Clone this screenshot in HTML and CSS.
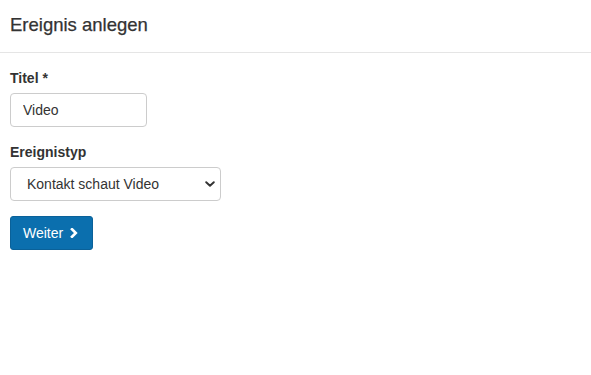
FILE: index.html
```html
<!DOCTYPE html>
<html lang="de">
<head>
<meta charset="utf-8">
<title>Ereignis anlegen</title>
<link rel="stylesheet" href="styles.css">
</head>
<body>
<div class="modal">
  <div class="modal-header">
    <h4 class="modal-title">Ereignis anlegen</h4>
  </div>
  <form class="modal-body">
    <div class="form-group">
      <label class="label" for="titel">Titel *</label>
      <input class="input input-title" id="titel" type="text" value="Video">
    </div>
    <div class="form-group">
      <label class="label" for="typ">Ereignistyp</label>
      <div class="select-wrap">
        <select class="select" id="typ">
          <option>Kontakt schaut Video</option>
        </select>
        <svg class="select-arrow" width="10" height="6" viewBox="0 0 10 6" aria-hidden="true"><path d="M1.2 1.2 L5 4.8 L8.8 1.2" fill="none" stroke="#333" stroke-width="1.9" stroke-linecap="round" stroke-linejoin="round"/></svg>
      </div>
    </div>
    <button class="btn" type="button">Weiter
      <svg class="btn-icon" width="8" height="10" viewBox="0 0 8 10" aria-hidden="true"><path d="M2 1.2 L5.8 5 L2 8.8" fill="none" stroke="#fff" stroke-width="2.6" stroke-linecap="square" stroke-linejoin="miter"/></svg>
    </button>
  </form>
</div>
</body>
</html>
```

FILE: styles.css
```css
* { box-sizing: border-box; }
html, body { margin: 0; padding: 0; background: #fff; }
body {
  font-family: "Liberation Sans", Arial, Helvetica, sans-serif;
  font-size: 14px;
  color: #333;
  width: 591px;
  height: 375px;
}
.modal-header {
  padding: 14px 10px 16px;
  border-bottom: 1px solid #e5e5e5;
}
.modal-title {
  margin: 0;
  font-size: 18.5px;
  line-height: 22px;
  font-weight: 400;
  color: #333;
  -webkit-text-stroke: 0.25px #333;
}
.modal-body {
  padding: 15px 10px;
  display: flex;
  flex-direction: column;
  align-items: flex-start;
  margin: 0;
}
.form-group {
  display: flex;
  flex-direction: column;
  align-items: flex-start;
  margin-bottom: 15px;
}
.label {
  display: block;
  font-weight: 700;
  font-size: 14px;
  line-height: 20px;
  margin-bottom: 5px;
  color: #333;
}
.input {
  height: 34px;
  padding: 0 12px;
  border: 1px solid #ccc;
  border-radius: 4px;
  font-family: inherit;
  font-size: 14px;
  color: #333;
  background: #fff;
  outline: none;
}
.input-title { width: 137px; }
.select-wrap { position: relative; width: 211px; }
.select {
  -webkit-appearance: none;
  appearance: none;
  width: 211px;
  height: 34px;
  padding: 0 24px 0 16px;
  border: 1px solid #ccc;
  border-radius: 4px;
  font-family: inherit;
  font-size: 14px;
  color: #333;
  background: #fff;
  outline: none;
}
.select-arrow {
  position: absolute;
  right: 6px;
  top: 14px;
  pointer-events: none;
}
.btn {
  display: inline-flex;
  align-items: center;
  gap: 7px;
  height: 34px;
  padding: 0 14px 0 12px;
  border: 1px solid #0a6199;
  border-radius: 3px;
  background: #0b6fae;
  color: #fff;
  font-family: inherit;
  font-size: 14px;
  cursor: pointer;
}
.btn-icon { display: block; }
```
